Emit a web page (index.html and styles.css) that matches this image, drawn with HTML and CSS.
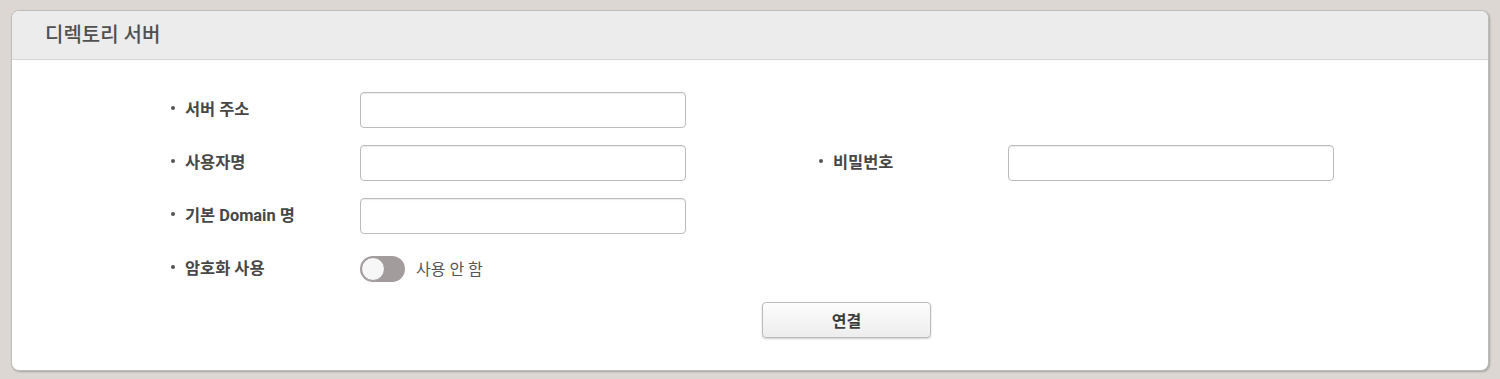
FILE: index.html
```html
<!DOCTYPE html>
<html lang="ko">
<head>
<meta charset="utf-8">
<link rel="stylesheet" href="styles.css">
</head>
<body>
<div class="panel">
  <div class="panel-head"><span class="panel-title">디렉토리 서버</span></div>
  <div class="panel-body">
    <div class="form">
      <label class="lbl">서버 주소</label>
      <input class="inp" type="text">
      <span></span><span></span><span></span>

      <label class="lbl">사용자명</label>
      <input class="inp" type="text">
      <span></span>
      <label class="lbl">비밀번호</label>
      <input class="inp" type="password">

      <label class="lbl">기본 Domain 명</label>
      <input class="inp" type="text">
      <span></span><span></span><span></span>

      <label class="lbl">암호화 사용</label>
      <div class="toggle-wrap">
        <span class="toggle"><span class="knob"></span></span>
        <span class="toggle-text">사용 안 함</span>
      </div>
      <span></span><span></span><span></span>
    </div>
    <div class="actions">
      <button class="btn" type="button">연결</button>
    </div>
  </div>
</div>
</body>
</html>
```

FILE: styles.css
```css
html, body {
  margin: 0;
  padding: 0;
}
body {
  background: #dcd7d2;
  font-family: Roboto, "Noto Sans CJK KR", sans-serif;
  padding: 10px 11px 0 11px;
  height: 379px;
  box-sizing: border-box;
}
.panel {
  width: 1478px;
  height: 361px;
  box-sizing: border-box;
  background: #fff;
  border: 1px solid #bdbdbd;
  border-radius: 8px;
  box-shadow: 1px 1px 2px rgba(0,0,0,0.25);
  overflow: hidden;
}
.panel-head {
  height: 48px;
  background: #ececec;
  border-bottom: 1px solid #d6d6d6;
  padding-left: 33px;
  display: flex;
  align-items: center;
}
.panel-title {
  font-size: 20px;
  font-weight: 500;
  color: #505050;
  margin-bottom: 3px;
}
.panel-body {
  padding: 32px 0 0 158px;
}
.form {
  display: grid;
  grid-template-columns: 190px 326px 132px 190px 326px;
  grid-auto-rows: 36px;
  row-gap: 17px;
  align-items: center;
}
.lbl {
  position: relative;
  padding-left: 15px;
  padding-bottom: 5px;
  font-size: 16.4px;
  font-weight: 700;
  color: #474747;
}
.lbl::before {
  content: "";
  position: absolute;
  left: 1px;
  top: 50%;
  width: 4px;
  height: 4px;
  margin-top: -4px;
  border-radius: 50%;
  background: #555;
}
.inp {
  width: 326px;
  height: 36px;
  box-sizing: border-box;
  border: 1px solid #bcbcbc;
  border-radius: 4px;
  box-shadow: inset 0 1px 1px rgba(0,0,0,0.08);
  background: #fff;
  margin: 0;
  padding: 0 8px;
  font-family: inherit;
}
.toggle-wrap {
  display: flex;
  align-items: center;
  gap: 11px;
}
.toggle {
  display: inline-flex;
  align-items: center;
  width: 45px;
  height: 26px;
  box-sizing: border-box;
  border-radius: 13px;
  background: #a39c9c;
  padding: 1px;
}
.knob {
  width: 24px;
  height: 24px;
  box-sizing: border-box;
  border-radius: 50%;
  background: #f7f7f7;
  border: 1px solid #9a9393;
}
.toggle-text {
  font-size: 16px;
  color: #555;
  padding-bottom: 2px;
}
.actions {
  display: flex;
  padding-left: 592px;
  margin-top: 15px;
}
.btn {
  width: 169px;
  height: 36px;
  box-sizing: border-box;
  border: 1px solid #bbb;
  border-radius: 4px;
  background: linear-gradient(#fdfdfd, #ededed);
  box-shadow: 0 1px 2px rgba(0,0,0,0.2);
  font-family: inherit;
  font-size: 16px;
  font-weight: 700;
  color: #3c3c3c;
  cursor: pointer;
}
```
